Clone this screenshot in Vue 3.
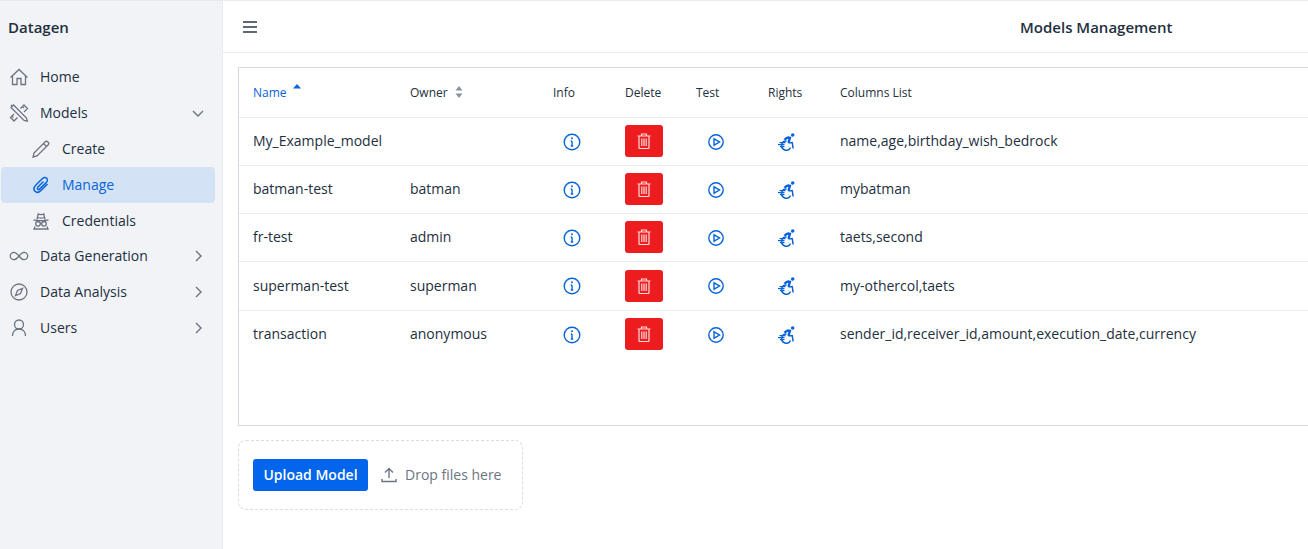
<script setup>
const rows = [
  { name: 'My_Example_model', owner: '', cols: 'name,age,birthday_wish_bedrock' },
  { name: 'batman-test', owner: 'batman', cols: 'mybatman' },
  { name: 'fr-test', owner: 'admin', cols: 'taets,second' },
  { name: 'superman-test', owner: 'superman', cols: 'my-othercol,taets' },
  { name: 'transaction', owner: 'anonymous', cols: 'sender_id,receiver_id,amount,execution_date,currency' },
]
</script>

<template>
  <div class="page">
    <aside class="side">
      <div class="brand">Datagen</div>
      <nav class="nav">
        <div class="item">
          <svg class="ico" viewBox="0 0 20 20"><path d="M1.500 10.500 10 2.500l8.500 8M3.500 9v8.500h4.500v-6h4v6h4.500V9" /></svg>
          <span>Home</span>
        </div>
        <div class="item">
          <svg class="ico" viewBox="0 0 20 20"><path d="M2 4.500 4.500 2l13 13 .8 3.200-3.200-.8zM3.500 3.500 2 2M11.500 5.500 15 2l3.500 3.500L15 9M8.500 14.500 5 18l-3.500-3.500L5 11M13.500 3.500l1.500 1.500M3 13l1.500 1.500" /></svg>
          <span>Models</span>
          <svg class="chev" viewBox="0 0 14 14"><path d="M2 5l5 5 5-5" /></svg>
        </div>
        <div class="item sub">
          <svg class="ico" viewBox="0 0 20 20"><path d="M3 14 14 3c1-1 2-1 3 0s1 2 0 3L6 17l-4 1zM12.500 4.500l3 3" /></svg>
          <span>Create</span>
        </div>
        <div class="item sub on">
          <svg class="ico" viewBox="0 0 20 20"><path d="M16.500 9l-6.500 6.500c-2 2-4.500 2.300-6 .8s-1.200-4 .7-6l6.500-6.500c1.500-1.500 3.500-1.500 4.500-.5s1 2.800-.5 4.300l-6.300 6.300c-.8.8-1.700.8-2.200.3s-.5-1.400.3-2.200l5.500-5.500" /></svg>
          <span>Manage</span>
        </div>
        <div class="item sub">
          <svg class="ico" viewBox="0 0 20 20"><path d="M6 8.500 7.200 3c1 .8 4.600.8 5.600 0L14 8.500M6.500 6.500c1.500.5 5.500.5 7 0M2.500 8.800c2 1 13 1 15 0M9.300 12.500h1.400M4 15.500 3 18h14l-1-2.500" /><circle cx="7" cy="12.800" r="2.300" /><circle cx="13" cy="12.800" r="2.300" /></svg>
          <span>Credentials</span>
        </div>
        <div class="item tight">
          <svg class="ico" viewBox="0 0 20 20"><path d="M10 10c-2-2.500-3.300-3.700-5-3.700a3.700 3.700 0 0 0 0 7.400c1.700 0 3-1.200 5-3.700s3.300-3.700 5-3.700a3.700 3.700 0 0 1 0 7.400c-1.700 0-3-1.200-5-3.700z" /></svg>
          <span>Data Generation</span>
          <svg class="chev" viewBox="0 0 14 14"><path d="M5 2l5 5-5 5" /></svg>
        </div>
        <div class="item">
          <svg class="ico" viewBox="0 0 20 20"><circle cx="10" cy="10" r="8" /><path d="M13.500 6.500l-2 5-5 2 2-5z" /></svg>
          <span>Data Analysis</span>
          <svg class="chev" viewBox="0 0 14 14"><path d="M5 2l5 5-5 5" /></svg>
        </div>
        <div class="item">
          <svg class="ico" viewBox="0 0 20 20"><circle cx="10" cy="6.500" r="4.500" /><path d="M3.500 18c0-4 2.500-7 6.500-7s6.500 3 6.500 7" /></svg>
          <span>Users</span>
          <svg class="chev" viewBox="0 0 14 14"><path d="M5 2l5 5-5 5" /></svg>
        </div>
      </nav>
    </aside>

    <main class="main">
      <header class="top">
        <svg class="burger" viewBox="0 0 14 12"><path d="M0 1h14M0 6h14M0 11h14" /></svg>
        <h1>Models Management</h1>
      </header>

      <section class="content">
        <div class="tablebox">
          <table>
            <colgroup>
              <col class="c1" /><col class="c2" /><col class="c3" /><col class="c4" /><col class="c5" /><col class="c6" /><col />
            </colgroup>
            <thead>
              <tr>
                <th class="sorted">Name<svg class="sort asc" viewBox="0 0 8 12"><path d="M4 0 8 4.500H0z" /></svg></th>
                <th>Owner<svg class="sort" viewBox="0 0 8 12"><path d="M4 0 7.500 4.500H.5zM4 12 .5 7.500h7z" /></svg></th>
                <th>Info</th>
                <th>Delete</th>
                <th>Test</th>
                <th>Rights</th>
                <th>Columns List</th>
              </tr>
            </thead>
            <tbody>
              <tr v-for="r in rows" :key="r.name">
                <td class="txt">{{ r.name }}</td>
                <td class="txt">{{ r.owner }}</td>
                <td>
                  <svg class="act info" viewBox="0 0 18 18"><circle cx="9" cy="9" r="7.800" /><path d="M9 8v5M7.800 8H9M7.800 13h2.400" /><circle class="dot" cx="9" cy="5.200" r="1" /></svg>
                </td>
                <td class="btn">
                  <button class="del" type="button">
                    <svg viewBox="0 0 14 16"><path d="M.5 3h13M4.500 3V1h5v2M2 3v11.500c0 .5.500 1 1 1h8c.5 0 1-.5 1-1V3M4.800 5.500v7.500M7 5.500v7.500M9.200 5.500v7.500" /></svg>
                  </button>
                </td>
                <td class="test">
                  <svg class="act" viewBox="0 0 16 16"><circle cx="8" cy="8" r="7.200" /><path d="M6 4.800v6.400L11.500 8z" /></svg>
                </td>
                <td class="rights">
                  <svg class="rt" viewBox="0 0 18 18">
                    <circle class="dot" cx="14.700" cy="2" r="1.800" />
                    <path class="torso" d="M6.500 6.800C8 5 10.500 4.200 12 4.800l-1.600 5" />
                    <path d="M10.500 9.800h3.800l.8 5.700M8.500 8a4.600 4.600 0 1 0 4 6.500" />
                    <path class="speed" d="M1.500 9.700h6M0 11.700h6.500M2 13.700h4.500" />
                  </svg>
                </td>
                <td class="txt">{{ r.cols }}</td>
              </tr>
            </tbody>
          </table>
        </div>

        <div class="drop">
          <button class="upload" type="button">Upload Model</button>
          <svg class="upico" viewBox="0 0 16 16"><path d="M8 11V2M4 5.500 8 1.500l4 4M1 12v2.500h14V12" /></svg>
          <span>Drop files here</span>
        </div>
      </section>
    </main>
  </div>
</template>

<style>
html, body { margin: 0; background: #fff; overflow: hidden; }
</style>

<style scoped>
.page {
  display: flex;
  width: 1308px;
  height: 549px;
  overflow: hidden;
  font-family: "Open Sans", "Noto Sans", sans-serif;
  font-size: 14px;
  color: #232f3e;
  border-top: 1px solid #e9ebed;
  box-sizing: border-box;
}
.side {
  width: 223px;
  flex: none;
  box-sizing: border-box;
  background: #f1f3f7;
  border-right: 1px solid #e9ebf0;
  padding: 0 7px 0 1px;
}
.brand { font-size: 15px; font-weight: 600; height: 58px; line-height: 53px; padding-left: 7px; }
.nav { display: flex; flex-direction: column; }
.item {
  display: flex;
  align-items: center;
  height: 36px;
  padding-left: 8px;
  padding-right: 10px;
  border-radius: 4px;
  line-height: 20px;
}
.item.tight { margin-top: -1px; }
.item span { flex: 1; margin-left: 11px; }
.item.sub { padding-left: 30px; }
.item.on { background: #d3e3f5; color: #0a64d8; }
.ico { width: 20px; height: 20px; fill: none; stroke: #6b7480; stroke-width: 1.300; flex: none; }
.on .ico { stroke: #0a64d8; stroke-width: 1.500; }
.chev { width: 14px; height: 14px; fill: none; stroke: #6b7480; stroke-width: 1.400; flex: none; }
.main { flex: 1; min-width: 0; }
.top {
  height: 52px;
  box-sizing: border-box;
  border-bottom: 1px solid #e9ebf0;
  display: flex;
  align-items: center;
  padding-left: 20px;
}
.burger { width: 14px; height: 12px; fill: none; stroke: #5f6873; stroke-width: 1.800; }
.top h1 { margin: 0 0 0 763px; font-size: 15px; font-weight: 600; white-space: nowrap; }
.content { padding: 14px 0 0 15px; }
.tablebox {
  width: 1100px;
  height: 359px;
  box-sizing: border-box;
  border: 1px solid #d5d9e0;
}
table { border-collapse: collapse; table-layout: fixed; width: 100%; }
.c1 { width: 157px; } .c2 { width: 143px; } .c3 { width: 72px; }
.c4 { width: 71px; } .c5 { width: 72px; } .c6 { width: 72px; }
th {
  height: 49px;
  padding: 0 0 0 14px;
  text-align: left;
  font-size: 12px;
  font-weight: 400;
  border-bottom: 1px solid #e9ebed;
  white-space: nowrap;
}
th.sorted { color: #0a64d8; }
.sort { width: 8px; height: 12px; margin-left: 7px; vertical-align: -1px; fill: #8a929c; }
.sort.asc { fill: #0a64d8; margin-left: 6px; vertical-align: 1px; }
td {
  padding: 0 0 0 14px;
  box-sizing: border-box;
  height: 48px;
  font-size: 14px;
  border-bottom: 1px solid #e9ebed;
  white-space: nowrap;
}
td.txt { padding-bottom: 2px; }
td.btn { padding-bottom: 1px; }
tr:nth-child(4) td { height: 49px; }
tr:last-child td { border-bottom: 0; }
.act { display: block; width: 18px; height: 18px; fill: none; stroke: #0a64d8; stroke-width: 1.400; margin-left: 10px; }
.test .act { width: 16px; height: 16px; margin-left: 12px; }
.dot { fill: #0a64d8; stroke: none; }
.rt { display: block; width: 18px; height: 18px; fill: none; stroke: #0a64d8; stroke-width: 1.500; margin-left: 10px; }
.rt .torso { stroke-width: 2.400; }
.rt .speed { stroke-width: 1.300; }
.del {
  display: flex;
  align-items: center;
  justify-content: center;
  width: 38px;
  height: 32px;
  padding: 0;
  background: #ec1c1f;
  border: 0;
  border-radius: 3px;
}
.del svg { width: 14px; height: 16px; fill: none; stroke: #fbdcdc; stroke-width: 1.200; }
.drop {
  display: flex;
  align-items: center;
  width: 285px;
  height: 70px;
  margin-top: 14px;
  box-sizing: border-box;
  border: 1px dashed #d9dce1;
  border-radius: 8px;
  padding-left: 14px;
  color: #6b7480;
}
.upload {
  width: 115px;
  height: 32px;
  padding: 0 0 2px;
  border: 0;
  border-radius: 3px;
  background: #0265eb;
  color: #fff;
  font: 600 14px "Open Sans", sans-serif;
}
.upico { width: 16px; height: 16px; margin-left: 13px; fill: none; stroke: #6b7480; stroke-width: 1.400; }
.drop span { margin-left: 8px; padding-bottom: 2px; }
</style>
